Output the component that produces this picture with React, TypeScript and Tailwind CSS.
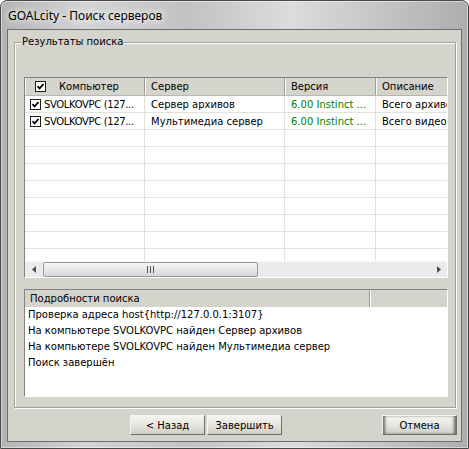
import React from "react";

type Server = { host: string; name: string; ver: string; info: string };

const servers: Server[] = [
  { host: "SVOLKOVPC (127...", name: "Сервер архивов", ver: "6.00 Instinct ...", info: "Всего архивов: 1" },
  { host: "SVOLKOVPC (127...", name: "Мультимедиа сервер", ver: "6.00 Instinct ...", info: "Всего видео-серверов: 1" },
];

const log = [
  "Проверка адреса host{http://127.0.0.1:3107}",
  "На компьютере SVOLKOVPC найден Сервер архивов",
  "На компьютере SVOLKOVPC найден Мультимедиа сервер",
  "Поиск завершён",
];

function Check() {
  return (
    <span className="w-[11px] h-[11px] border border-[#1f1f1f] bg-white flex items-center justify-center shrink-0">
      <svg width="7" height="7" viewBox="0 0 7 7">
        <path d="M0.5 3.2 L2.6 5.4 L6.5 1" stroke="#000" strokeWidth="1.7" fill="none" />
      </svg>
    </span>
  );
}

function Btn({ children, active = false }: { children: React.ReactNode; active?: boolean }) {
  return (
    <button
      className={
        "w-[75px] h-[20px] border border-t-[#f4f4f0] border-l-[#f4f4f0] border-r-[#6e6e6e] border-b-[#6e6e6e] bg-[linear-gradient(#f5f5f1,#e6e5de_50%,#cfcec6)] text-black flex items-center justify-center " +
        (active ? "shadow-[inset_3px_0_3px_-1px_#6a6a66,inset_-3px_0_3px_-1px_#6a6a66]" : "")
      }
    >
      {children}
    </button>
  );
}

function Row({ s }: { s?: Server }) {
  return (
    <div className="flex h-[17px] shrink-0">
      <div className="w-[120px] shrink-0 border-r border-b border-[#e2e1da] flex items-center pl-[5px] gap-[3px] overflow-hidden whitespace-nowrap">
        {s && <Check />}
        {s && <span className="tracking-[-0.35px]">{s.host}</span>}
      </div>
      <div className="w-[140px] shrink-0 border-r border-b border-[#e2e1da] flex items-center pl-[6px] overflow-hidden whitespace-nowrap">
        {s?.name}
      </div>
      <div className="w-[91px] shrink-0 border-r border-b border-[#e2e1da] flex items-center pl-[6px] overflow-hidden whitespace-nowrap text-[#008000]">
        {s?.ver}
      </div>
      <div className="w-[120px] shrink-0 border-r border-b border-[#e2e1da] flex items-center pl-[6px] overflow-hidden whitespace-nowrap">
        {s?.info}
      </div>
    </div>
  );
}

export default function App() {
  const rows: (Server | undefined)[] = [...servers, ...Array(8).fill(undefined)];
  return (
    <div className="w-[469px] h-[449px] rounded-t-[7px] border border-[#4a4a4a] bg-[linear-gradient(90deg,#b3b3b3,#d4d4d4_18%,#c2c2c2_40%,#dcdcdc_62%,#c4c4c4_82%,#adadad)] shadow-[inset_0_0_0_1px_rgba(255,255,255,0.45)] flex flex-col px-[6px] pb-[6px] font-['DejaVu_Sans',Verdana,sans-serif] text-[10px] text-black">
      {/* caption */}
      <div className="h-[28px] shrink-0 flex items-center pl-[1px] pt-[1px]">
        <span className="font-['Noto_Sans',sans-serif] text-[12px] [text-shadow:0_0_6px_#fff,0_0_10px_#fff]">
          GOALcity - Поиск серверов
        </span>
      </div>

      {/* client area */}
      <div className="flex-1 border border-[#6d6d6d] bg-[#d5d4cc] flex flex-col">
        <div className="relative mt-[12px] ml-[6px] mr-[5px] border border-[#a09f98] shadow-[1px_1px_0_#fff,inset_1px_1px_0_#fff] pt-[34px] pl-[9px] pr-[7px] pb-[10px] flex flex-col">
          <span className="absolute -top-[8px] left-[6px] bg-[#d5d4cc] px-px leading-[14px]">Результаты поиска</span>

          {/* server list */}
          <div className="h-[201px] border border-t-[#828282] border-l-[#828282] border-r-white border-b-white bg-white flex flex-col overflow-hidden">
            <div className="h-[18px] shrink-0 flex bg-[#d5d4cc] border-b border-[#b8b7b0]">
              <div className="w-[120px] shrink-0 border-r border-[#9d9c95] shadow-[inset_1px_0_0_#fff] flex items-center pl-[10px]">
                <Check />
                <span className="ml-[13px]">Компьютер</span>
              </div>
              <div className="w-[140px] shrink-0 border-r border-[#9d9c95] shadow-[inset_1px_0_0_#fff] flex items-center pl-[6px]">Сервер</div>
              <div className="w-[91px] shrink-0 border-r border-[#9d9c95] shadow-[inset_1px_0_0_#fff] flex items-center pl-[6px]">Версия</div>
              <div className="w-[120px] shrink-0 border-r border-[#9d9c95] shadow-[inset_1px_0_0_#fff] flex items-center pl-[6px]">Описание</div>
            </div>
            <div className="flex-1 overflow-hidden flex flex-col">
              {rows.map((s, i) => (
                <Row key={i} s={s} />
              ))}
            </div>
            {/* horizontal scroll bar */}
            <div className="h-[16px] shrink-0 flex bg-[#ebebeb] border-t border-[#f8f8f8]">
              <div className="w-[18px] shrink-0 flex items-center justify-center">
                <svg width="4" height="7" viewBox="0 0 4 7">
                  <path d="M4 0 L0 3.5 L4 7 Z" fill="#4d4d4d" />
                </svg>
              </div>
              <div className="w-[215px] shrink-0 rounded-[2px] border border-[#9a9a9a] bg-[linear-gradient(#f6f6f6,#e8e8e8_50%,#d6d6d6)] flex items-center justify-center gap-[2px]">
                <span className="w-px h-[7px] bg-[#555]" />
                <span className="w-px h-[7px] bg-[#555]" />
                <span className="w-px h-[7px] bg-[#555]" />
              </div>
              <div className="flex-1" />
              <div className="w-[17px] shrink-0 flex items-center justify-center">
                <svg width="4" height="7" viewBox="0 0 4 7">
                  <path d="M0 0 L4 3.5 L0 7 Z" fill="#4d4d4d" />
                </svg>
              </div>
            </div>
          </div>

          {/* search log */}
          <div className="mt-[11px] h-[108px] border border-t-[#828282] border-l-[#828282] border-r-white border-b-white bg-white flex flex-col">
            <div className="h-[17px] shrink-0 flex bg-[#d5d4cc]">
              <div className="w-[345px] shrink-0 border-r border-[#9d9c95] flex items-center pl-[5px]">Подробности поиска</div>
              <div className="flex-1 shadow-[inset_1px_0_0_#fff]" />
            </div>
            <div className="flex flex-col pl-[3px] leading-[16px]">
              {log.map((l) => (
                <div key={l}>{l}</div>
              ))}
            </div>
          </div>
        </div>

        {/* dialog buttons */}
        <div className="mt-[7px] flex pl-[122px] pr-[4px] gap-[2px]">
          <Btn>&lt; Назад</Btn>
          <Btn>Завершить</Btn>
          <div className="flex-1" />
          <Btn active>Отмена</Btn>
        </div>
      </div>
    </div>
  );
}
